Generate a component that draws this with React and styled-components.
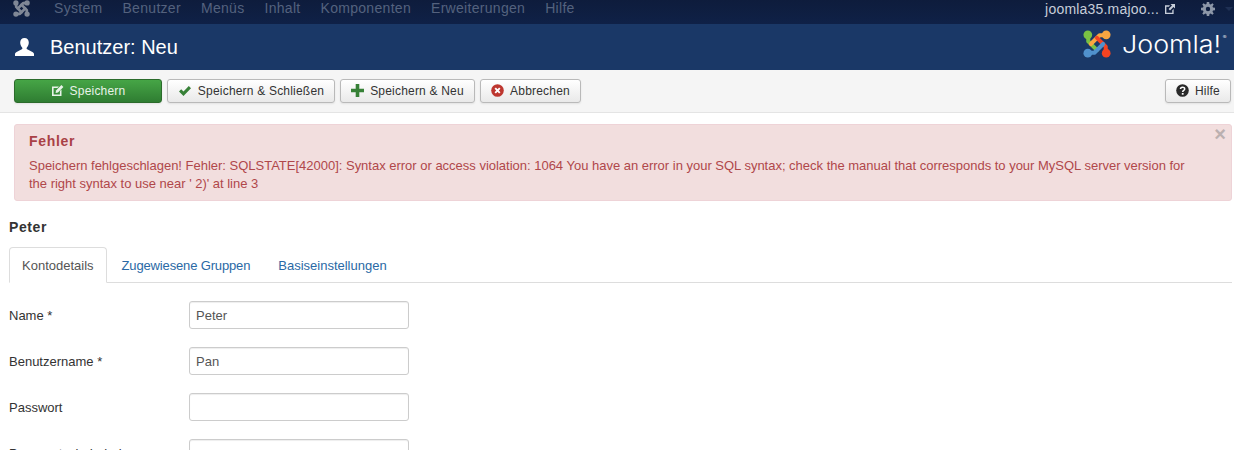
import React from "react";
import styled, {createGlobalStyle} from "styled-components";

const GlobalStyle = createGlobalStyle`
    html, body {
        margin: 0;
        padding: 0;
        height: 450px;
        overflow: hidden;
        background: #fff;
        font-family: "Liberation Sans", Arial, sans-serif;
    }
`;

const NavBar = styled.div`
    display: flex;
    align-items: flex-start;
    height: 24px;
    background: linear-gradient(#0e1c3c, #0f2147);
    box-sizing: border-box;
`;

const NavBrand = styled.div`
    width: 44px;
    padding: 0 0 0 13px;
    box-sizing: border-box;
    line-height: 0;
`;

const NavLinks = styled.div`
    display: flex;
    gap: 20px;
    margin-left: 10px;
    flex: 1;
`;

const NavLink = styled.span`
    font-size: 14px;
    letter-spacing: 0.3px;
    line-height: 16px;
    color: #54627e;
`;

const NavRight = styled.div`
    display: flex;
    align-items: center;
    height: 18px;
    font-size: 14px;
    letter-spacing: 0.2px;
    color: #c6cdd9;
`;

const SiteLink = styled.span`
    margin-right: 6px;
`;

const CogWrap = styled.span`
    margin: 0 10px 0 26px;
    line-height: 0;
`;

const Caret = styled.span`
    width: 0;
    height: 0;
    margin-right: 1px;
    border-left: 4px solid transparent;
    border-right: 4px solid transparent;
    border-top: 4px solid #1f3054;
`;

const Header = styled.div`
    display: flex;
    align-items: center;
    justify-content: space-between;
    height: 46px;
    background: #1a3867;
    padding: 0 6px 0 15px;
`;

const Title = styled.h1`
    display: flex;
    align-items: center;
    gap: 16px;
    margin: 0;
    color: #fff;
    font-size: 20px;
    font-weight: 400;
`;

const Logo = styled.div`
    display: flex;
    align-items: center;
    gap: 11px;
    margin-top: -7px;
`;

const LogoWord = styled.span`
    display: block;
    position: relative;
    width: 106px;
    margin-top: 2px;
    font-family: "Inter", sans-serif;
    font-weight: 300;
    font-size: 24px;
    line-height: 28px;
    color: #fff;
    transform: scaleX(1.12);
    transform-origin: left center;
    white-space: nowrap;
`;

const Reg = styled.sup`
    position: absolute;
    top: 4px;
    left: 90px;
    font-size: 5px;
    line-height: 5px;
`;

const Toolbar = styled.div`
    display: flex;
    align-items: center;
    gap: 5px;
    height: 43px;
    box-sizing: border-box;
    padding: 0 3px 1px 14px;
    background: #f5f5f5;
    border-bottom: 1px solid #e4e4e4;
`;

const Button = styled.div`
    display: flex;
    align-items: center;
    justify-content: center;
    gap: 6px;
    box-sizing: border-box;
    height: 24px;
    width: ${p => p.$width}px;
    margin-left: ${p => p.$push ? "auto" : "0"};
    font-size: 12px;
    letter-spacing: 0.2px;
    border-radius: 3px;
    border: 1px solid ${p => p.$primary ? "#2b6b2b" : "#b9b9b9"};
    color: ${p => p.$primary ? "#e8f3e8" : "#333"};
    background: ${p => p.$primary ? "linear-gradient(#46a546, #2f7d32)" : "linear-gradient(#fff, #e9e9e9)"};
    box-shadow: 0 1px 2px rgba(0, 0, 0, .08);
`;

const Content = styled.div`
    padding: 11px 2px 0 9px;
`;

const Alert = styled.div`
    position: relative;
    margin-left: 5px;
    height: 77px;
    box-sizing: border-box;
    padding: 8px 30px 0 14px;
    background: #f2dede;
    border: 1px solid #eed3d7;
    border-radius: 3px;
    color: #b0474a;
    font-size: 13px;
    letter-spacing: -0.01px;
    line-height: 18px;
`;

const AlertHeading = styled.div`
    font-size: 14px;
    font-weight: 700;
    letter-spacing: 0.7px;
    line-height: 16px;
    margin-bottom: 8px;
    color: #a94146;
`;

const Close = styled.span`
    position: absolute;
    top: -1px;
    right: 5px;
    font-size: 20px;
    line-height: 20px;
    font-weight: 700;
    color: #bbb0b0;
`;

const UserName = styled.div`
    margin-top: 18px;
    font-size: 14px;
    font-weight: 700;
    letter-spacing: 0.6px;
    line-height: 16px;
    color: #333;
`;

const Tabs = styled.div`
    display: flex;
    gap: 2px;
    height: 36px;
    margin-top: 12px;
    box-sizing: border-box;
    border-bottom: 1px solid #ddd;
`;

const Tab = styled.div`
    display: flex;
    align-items: center;
    box-sizing: border-box;
    height: 36px;
    padding: 0 12px;
    font-size: 13px;
    letter-spacing: ${p => p.$tight ? "-0.15px" : "0"};
    border: 1px solid ${p => p.$active ? "#ddd" : "transparent"};
    border-bottom-color: ${p => p.$active ? "#fff" : "transparent"};
    border-radius: 4px 4px 0 0;
    background: ${p => p.$active ? "#fff" : "transparent"};
    color: ${p => p.$active ? "#555" : "#2a69a5"};
`;

const Form = styled.div`
    display: flex;
    flex-direction: column;
    gap: 18px;
    margin-top: 18px;
`;

const Row = styled.div`
    display: flex;
    align-items: center;
    height: 28px;
`;

const Label = styled.label`
    width: 180px;
    font-size: 13px;
    color: #333;
`;

const Input = styled.input`
    box-sizing: border-box;
    width: 220px;
    height: 28px;
    padding: 0 6px;
    border: 1px solid #ccc;
    border-radius: 3px;
    font-family: inherit;
    font-size: 13px;
    color: #555;
    box-shadow: inset 0 1px 1px rgba(0, 0, 0, .07);
    outline: none;
`;

// four hooks turned around the middle, they leave a small diamond open
const JoomlaMark = ({width, height, colors, weight}) => (
    <svg width={width} height={height} viewBox="0 0 32 32" fill="none" strokeLinecap="round" strokeLinejoin="round">
        <path d="M6 6 L6 13 L16 23" stroke={colors[0]} strokeWidth={weight}/>
        <circle cx="5.5" cy="5.5" r="5" fill={colors[0]}/>
        <path d="M26 6 L19 6 L9 16" stroke={colors[1]} strokeWidth={weight}/>
        <circle cx="26.5" cy="5.5" r="5" fill={colors[1]}/>
        <path d="M26 26 L26 19 L16 9" stroke={colors[2]} strokeWidth={weight}/>
        <circle cx="26.5" cy="26.5" r="5" fill={colors[2]}/>
        <path d="M6 26 L13 26 L23 16" stroke={colors[3]} strokeWidth={weight}/>
        <circle cx="5.5" cy="26.5" r="5" fill={colors[3]}/>
    </svg>
);

const EditIcon = ({color}) => (
    <svg width="13" height="13" viewBox="0 0 13 13">
        <path d="M1 2.5h7l-1.600 1.600H2.600v6.300h6.300V7l1.600-1.600V12H1z" fill={color}/>
        <path d="M5 6.500 10.400 1 12.400 3 7 8.500l-2.400.4z" fill={color}/>
    </svg>
);

const CheckIcon = () => (
    <svg width="14" height="12" viewBox="0 0 14 12">
        <path d="M1 6.500 3.200 4.300 5.500 6.600 10.800 1 13 3.200 5.500 11z" fill="#378137"/>
    </svg>
);

const PlusIcon = () => (
    <svg width="13" height="13" viewBox="0 0 13 13">
        <path d="M4.700 0h3.600v4.700H13v3.600H8.300V13H4.700V8.300H0V4.700h4.700z" fill="#378137"/>
    </svg>
);

const CancelIcon = () => (
    <svg width="13" height="13" viewBox="0 0 13 13">
        <circle cx="6.500" cy="6.500" r="6.300" fill="#bd362f"/>
        <path d="M4.200 4.200l4.600 4.600M8.800 4.200l-4.600 4.600" stroke="#fff" strokeWidth="1.900"/>
    </svg>
);

const HelpIcon = () => (
    <svg width="13" height="13" viewBox="0 0 13 13">
        <circle cx="6.500" cy="6.500" r="6.300" fill="#2a2a2a"/>
        <path d="M4.500 5.100c0-2.500 4.200-2.500 4.200-.2 0 1.500-2 1.500-2 3" stroke="#fff" strokeWidth="1.500" fill="none"/>
        <rect x="5.800" y="9" width="1.800" height="1.700" fill="#fff"/>
    </svg>
);

const UserIcon = () => (
    <svg width="19" height="18" viewBox="0 0 19 18">
        <path d="M9.500 0c2.700 0 4.300 2 4.300 4.600 0 2-.8 3.800-1.900 4.800-.5.500-.4 1.500.3 1.900l5.200 2.600c1 .5 1.600 1.300 1.600 2.300V18H0v-1.800c0-1 .6-1.800 1.600-2.300l5.200-2.600c.7-.4.8-1.400.3-1.900-1.100-1-1.900-2.800-1.900-4.800C5.200 2 6.800 0 9.500 0z" fill="#fff"/>
    </svg>
);

const ExternalIcon = () => (
    <svg width="10" height="10" viewBox="0 0 11 11">
        <path d="M0 1.500h5.500L4.300 3H1.500v6.500H8V7l1.500-1.400V11H0z" fill="#c6cdd9"/>
        <path d="M6 0h5v5L9.300 3.300 5.500 7.100 3.900 5.500 7.700 1.700z" fill="#c6cdd9"/>
    </svg>
);

const CogIcon = () => (
    <svg width="14" height="14" viewBox="0 0 14 14">
        <path fillRule="evenodd" fill="#8d97a8" d="M5.800 0h2.400l.3 2 1.200.5L11.400 1.300 12.700 2.600 11.500 4.300 12 5.500l2 .3v2.400l-2 .3-.5 1.200 1.200 1.700-1.300 1.300-1.700-1.200-1.200.5-.3 2H5.800l-.3-2-1.200-.5-1.700 1.200L1.300 11.400 2.500 9.700 2 8.500l-2-.3V5.800l2-.3.5-1.200L1.300 2.600 2.600 1.300l1.700 1.200 1.200-.5zM7 4.800a2.200 2.200 0 1 0 0 4.400 2.200 2.200 0 0 0 0-4.400z"/>
    </svg>
);

const navItems = ["System", "Benutzer", "Menüs", "Inhalt", "Komponenten", "Erweiterungen", "Hilfe"];
const fields = [
    {label: "Name *", value: "Peter"},
    {label: "Benutzername *", value: "Pan"},
    {label: "Passwort", value: ""},
    {label: "Passwort wiederholen", value: ""},
];

export default function App() {
    return (
        <>
            <GlobalStyle/>
            <NavBar>
                <NavBrand>
                    <JoomlaMark width={17} height={17} weight={5} colors={["#7f8796", "#7f8796", "#7f8796", "#7f8796"]}/>
                </NavBrand>
                <NavLinks>
                    {navItems.map(item => <NavLink key={item}>{item}</NavLink>)}
                </NavLinks>
                <NavRight>
                    <SiteLink>joomla35.majoo...</SiteLink>
                    <ExternalIcon/>
                    <CogWrap><CogIcon/></CogWrap>
                    <Caret/>
                </NavRight>
            </NavBar>
            <Header>
                <Title><UserIcon/>Benutzer: Neu</Title>
                <Logo>
                    <JoomlaMark width={28} height={28} weight={4.6} colors={["#7ac143", "#f9a541", "#f44321", "#5091cd"]}/>
                    <LogoWord>Joomla!<Reg>®</Reg></LogoWord>
                </Logo>
            </Header>
            <Toolbar>
                <Button $primary $width={148}><EditIcon color="#e8f3e8"/>Speichern</Button>
                <Button $width={168}><CheckIcon/>Speichern &amp; Schließen</Button>
                <Button $width={135}><PlusIcon/>Speichern &amp; Neu</Button>
                <Button $width={101}><CancelIcon/>Abbrechen</Button>
                <Button $push $width={66}><HelpIcon/>Hilfe</Button>
            </Toolbar>
            <Content>
                <Alert>
                    <Close>×</Close>
                    <AlertHeading>Fehler</AlertHeading>
                    Speichern fehlgeschlagen! Fehler: SQLSTATE[42000]: Syntax error or access violation: 1064 You have an error in your SQL syntax; check the manual that corresponds to your MySQL server version for the right syntax to use near ' 2)' at line 3
                </Alert>
                <UserName>Peter</UserName>
                <Tabs>
                    <Tab $active>Kontodetails</Tab>
                    <Tab $tight>Zugewiesene Gruppen</Tab>
                    <Tab>Basiseinstellungen</Tab>
                </Tabs>
                <Form>
                    {fields.map(field => (
                        <Row key={field.label}>
                            <Label>{field.label}</Label>
                            <Input defaultValue={field.value}/>
                        </Row>
                    ))}
                </Form>
            </Content>
        </>
    );
}
